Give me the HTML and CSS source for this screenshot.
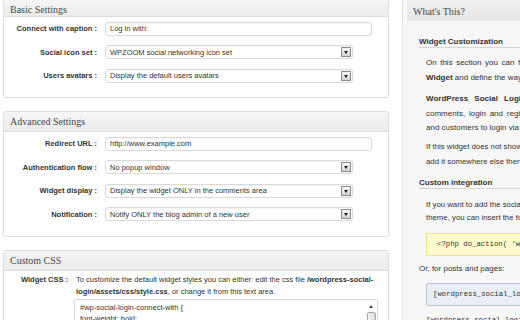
FILE: index.html
```html
<!DOCTYPE html>
<html>
<head>
<meta charset="utf-8">
<link rel="stylesheet" href="styles.css">
</head>
<body>
<div class="page">
  <div class="main">
    <div class="panel cut">
      <div class="panel-head">Basic Settings</div>
      <div class="panel-body">
        <div class="row"><span class="lbl">Connect with caption :</span><div class="field input">Log in with:</div></div>
        <div class="row"><span class="lbl">Social icon set :</span><div class="field select"><span>WPZOOM social networking icon set</span><span class="arrow"></span></div></div>
        <div class="row"><span class="lbl">Users avatars :</span><div class="field select"><span>Display the default users avatars</span><span class="arrow"></span></div></div>
      </div>
    </div>
    <div class="panel">
      <div class="panel-head">Advanced Settings</div>
      <div class="panel-body">
        <div class="row"><span class="lbl">Redirect URL :</span><div class="field input">http://www.example.com</div></div>
        <div class="row"><span class="lbl">Authentication flow :</span><div class="field select"><span>No popup window</span><span class="arrow"></span></div></div>
        <div class="row"><span class="lbl">Widget display :</span><div class="field select"><span>Display the widget ONLY in the comments area</span><span class="arrow"></span></div></div>
        <div class="row"><span class="lbl">Notification :</span><div class="field select"><span>Notify ONLY the blog admin of a new user</span><span class="arrow"></span></div></div>
      </div>
    </div>
    <div class="panel">
      <div class="panel-head">Custom CSS</div>
      <div class="css-body">
        <span class="css-lbl">Widget CSS :</span>
        <div class="css-main">
          <div class="desc">To customize the default widget styles you can either: edit the css file <b>/wordpress-social-</b><br><b>login/assets/css/style.css</b>, or change it from this text area.</div>
          <div class="ta">
            <div class="ta-text">#wp-social-login-connect-with {<br>font-weight: bold;<br>}</div>
            <div class="sb"><div class="sb-up"></div><div class="sb-thumb"></div></div>
          </div>
        </div>
      </div>
    </div>
  </div>
  <div class="side">
    <div class="side-head">What's This?</div>
    <div class="side-body">
      <h4 class="sub first">Widget Customization</h4>
      <p class="txt p1"><span class="ln ws1">On this section you can fully customize the Social Login</span><span class="ln"><b>Widget</b> and define the way you want it to look and behave.</span></p>
      <p class="txt p2"><span class="ln ws4"><b>WordPress Social Login Widget</b> will be generated into the</span><span class="ln ws2">comments, login and register forms enabling your website vistors</span><span class="ln">and customers to login via social networks.</span></p>
      <p class="txt p3"><span class="ln">If this widget does not show up on your custom theme or you want to</span><span class="ln">add it somewhere else then refer to the next section.</span></p>
      <h4 class="sub second">Custom integration</h4>
      <p class="txt p4"><span class="ln">If you want to add the social login widget to another location in your</span><span class="ln">theme, you can insert the following code in that location:</span></p>
      <div class="code yellow">&lt;?php do_action( 'wordpress_social_login' ); ?&gt;</div>
      <p class="or">Or, for posts and pages:</p>
      <div class="code blue">[wordpress_social_login]</div>
      <p class="txt p5"><span class="ln">[wordpress_social_login] shortcode can be used in any post or page.</span></p>
    </div>
  </div>
</div>
</body>
</html>
```

FILE: styles.css
```css
* { box-sizing: border-box; }
html, body { margin: 0; padding: 0; }
body {
  width: 520px;
  height: 320px;
  overflow: hidden;
  background: #fff;
  font-family: "Liberation Sans", Arial, sans-serif;
  color: #333;
}
.page { display: flex; align-items: flex-start; }

.main { flex: none; width: 386px; margin-left: 3px; margin-top: -1px; }
.panel {
  border: 1px solid #dcdcdc;
  border-radius: 3px;
  margin-bottom: 13px;
  background: #fff;
}
.panel-head {
  height: 20px;
  border-bottom: 1px solid #dcdcdc;
  background: linear-gradient(#f6f6f6, #ebebeb);
  font-family: "Liberation Serif", "Times New Roman", serif;
  font-size: 10px;
  line-height: 19px;
  color: #464646;
  padding-left: 6px;
}
.panel.cut .panel-head { height: 17px; line-height: 19px; }
.panel-body { padding-bottom: 9.5px; }
.row { display: flex; align-items: center; height: 23.5px; }
.lbl {
  flex: none;
  width: 93px;
  margin-right: 8px;
  text-align: right;
  font-size: 7.5px;
  font-weight: bold;
  color: #333;
}
.field {
  height: 14px;
  border: 1px solid #dadada;
  border-radius: 3px;
  background: #fff;
  font-size: 7.5px;
  color: #333;
  display: flex;
  align-items: center;
  padding-left: 4px;
  box-shadow: inset 0 1px 1px rgba(0,0,0,0.04);
}
.input { width: 267px; }
.select { width: 248px; justify-content: space-between; padding-right: 1px; }
.arrow {
  flex: none;
  width: 10px;
  height: 10px;
  border: 1px solid #8c8c8c;
  background: linear-gradient(#f6f6f6, #d2d2d2);
  display: flex;
  align-items: center;
  justify-content: center;
}
.arrow::after {
  content: "";
  border-left: 2.5px solid transparent;
  border-right: 2.5px solid transparent;
  border-top: 3px solid #222;
  margin-top: 1px;
}

.css-body { display: flex; align-items: flex-start; padding-top: 3px; }
.css-lbl {
  flex: none;
  width: 64px;
  margin-right: 8px;
  text-align: right;
  font-size: 7.5px;
  font-weight: bold;
  line-height: 12px;
}
.css-main { flex: none; width: 305px; }
.desc { font-size: 7.5px; line-height: 12px; white-space: nowrap; color: #333; }
.ta {
  display: flex;
  margin-top: 1px;
  margin-left: -2px;
  width: 304px;
  height: 60px;
  border: 1px solid #dadada;
  border-radius: 2px;
  background: #fff;
}
.ta-text { flex: 1; font-size: 7.5px; line-height: 11px; padding: 2px 5px; color: #333; }
.sb { flex: none; width: 12px; padding: 2px 1px; display: flex; flex-direction: column; align-items: center; }
.sb-up {
  width: 0; height: 0;
  border-left: 2px solid transparent;
  border-right: 2px solid transparent;
  border-bottom: 3px solid #444;
  margin-top: 3px;
  margin-bottom: 4px;
}
.sb-thumb {
  width: 9px;
  height: 30px;
  border: 1px solid #a5a5a5;
  border-radius: 2px;
  background: linear-gradient(90deg, #f3f3f3, #dcdcdc);
}

.side {
  flex: none;
  width: 300px;
  min-height: 330px;
  margin-left: 13px;
  border-left: 1px solid #e2e2e2;
  background: #f7f7f7;
  padding-left: 4px;
}
.side-head {
  height: 21px;
  background: linear-gradient(#f1f1f1, #e6e6e6);
  font-family: "Liberation Serif", "Times New Roman", serif;
  font-size: 10px;
  line-height: 23px;
  color: #464646;
  padding-left: 6px;
}
.side-body { padding-left: 12px; }
.sub {
  margin: 0;
  font-size: 8px;
  font-weight: bold;
  line-height: 11px;
  border-bottom: 1px solid #d6d6d6;
  color: #333;
}
.sub.first { margin-top: 15px; }
.sub.second { margin-top: 8px; }
.txt { margin: 0 0 0 7px; font-size: 8px; line-height: 14.5px; color: #333; }
.ln { display: block; white-space: nowrap; }
.ws1 { word-spacing: 1.3px; }
.ws2 { word-spacing: 1.6px; }
.ws4 { word-spacing: 4px; }
.p1 { margin-top: 8px; }
.p2 { margin-top: 7px; }
.p3 { margin-top: 3px; line-height: 15px; font-size: 7.8px; }
.p4 { margin-top: 9px; line-height: 13px; font-size: 7.8px; }
.code {
  margin-left: 7px;
  height: 23px;
  font-family: "Liberation Mono", "Courier New", monospace;
  font-size: 7.3px;
  line-height: 21px;
  white-space: nowrap;
  color: #333;
}
.yellow { margin-top: 9.5px; background: #fffbcc; border: 1px solid #ece39a; padding-left: 10px; }
.blue { margin-top: 8px; background: #eaeef6; border: 1px solid #b9c4da; border-radius: 2px; padding-left: 6px; }
.or { margin: 7px 0 0; font-size: 8px; line-height: 12px; color: #333; }
.p5 { margin-top: 8px; line-height: 12px; font-family: "Liberation Mono", "Courier New", monospace; font-size: 7.3px; }
```
